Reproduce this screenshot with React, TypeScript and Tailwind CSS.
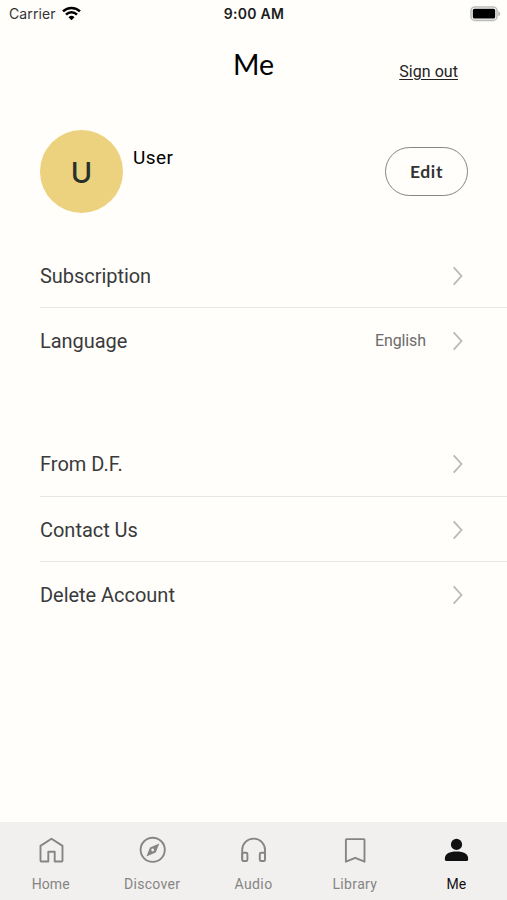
import React from "react";

function Chevron() {
  return (
    <svg width="12" height="20" viewBox="0 0 12 20" fill="none" stroke="#b9b9b7" strokeWidth="1.8" className="shrink-0">
      <path d="M1.7 1.3 9.5 10 1.7 18.7" />
    </svg>
  );
}

type RowProps = { label: string; tracking: string; value?: string; last?: boolean };

function Row({ label, tracking, value, last }: RowProps) {
  return (
    <li
      className={`ml-10 flex h-[65.2px] items-center border-b pr-[43px] pt-[2px] ${last ? "border-transparent" : "border-[#e6e6e4]"}`}
    >
      <span className={`flex-1 text-[20px] leading-6 text-[#3a3a3b] ${tracking}`}>{label}</span>
      {value && <span className="mr-[26px] text-[16px] leading-5 tracking-[-0.1px] text-[#6b6b6a]">{value}</span>}
      <Chevron />
    </li>
  );
}

function HomeIcon() {
  return (
    <svg width="28" height="28" viewBox="0 0 28 28" fill="none" stroke="currentColor" strokeWidth="1.9" strokeLinejoin="round">
      <path d="M3.5 9.9 14.5 2.7l11 7.2v14.7a.9.9 0 0 1-.9.9h-6.9v-9.7h-6.4v9.7H4.4a.9.9 0 0 1-.9-.9Z" />
    </svg>
  );
}

function CompassIcon() {
  return (
    <svg width="28" height="28" viewBox="0 0 28 28" fill="none" stroke="currentColor" strokeWidth="1.9">
      <circle cx="14.7" cy="13.8" r="12.1" />
      <path
        fill="currentColor"
        stroke="none"
        fillRule="evenodd"
        d="m21.3 7.5-3.6 9.1-9.3 3.9 3.6-9.1Zm-6.6 5.1a1.4 1.4 0 1 0 0 2.8 1.4 1.4 0 0 0 0-2.8Z"
      />
    </svg>
  );
}

function HeadphonesIcon() {
  return (
    <svg width="28" height="28" viewBox="0 0 28 28" fill="none" stroke="currentColor" strokeWidth="1.9" strokeLinejoin="round">
      <path d="M3.2 23.5V14a11.4 11.4 0 0 1 22.8 0v9.5" />
      <rect x="3.2" y="16.8" width="5.2" height="8.2" rx="1.3" />
      <rect x="20.8" y="16.8" width="5.2" height="8.2" rx="1.3" />
    </svg>
  );
}

function BookmarkIcon() {
  return (
    <svg width="28" height="28" viewBox="0 0 28 28" fill="none" stroke="currentColor" strokeWidth="1.9" strokeLinejoin="round">
      <path d="M4.9 3.8a.7.7 0 0 1 .7-.7h17.2a.7.7 0 0 1 .7.7v21.9l-9.3-3.9-9.3 3.9Z" />
    </svg>
  );
}

function PersonIcon() {
  return (
    <svg width="28" height="28" viewBox="0 0 28 28" fill="currentColor">
      <circle cx="14.5" cy="8.4" r="5.6" />
      <path d="M2.9 22.2c0-4.1 4.3-6.8 11.6-6.8s11.6 2.7 11.6 6.8v1.3a1.6 1.6 0 0 1-1.6 1.6h-20a1.6 1.6 0 0 1-1.6-1.6Z" />
    </svg>
  );
}

const tabs = [
  { label: "Home", Icon: HomeIcon, tracking: "tracking-[0.05px]" },
  { label: "Discover", Icon: CompassIcon, tracking: "tracking-[0.3px]" },
  { label: "Audio", Icon: HeadphonesIcon, tracking: "tracking-[0.4px]" },
  { label: "Library", Icon: BookmarkIcon, tracking: "tracking-[0.35px]" },
  { label: "Me", Icon: PersonIcon, tracking: "tracking-[0px]" },
];

export default function App() {
  return (
    <div className="flex h-[900px] w-[507px] flex-col overflow-hidden bg-[#fffefb] font-['Roboto',sans-serif] text-black">
      <div className="grid h-[27px] shrink-0 grid-cols-3 items-center pl-[9px] pr-[8px] font-['Inter',sans-serif]">
        <div className="flex items-center gap-[6px] text-[14px] tracking-[0.1px] text-[#333]">
          <span>Carrier</span>
          <svg width="19" height="15" viewBox="0 0 19 15" fill="none" stroke="#000" strokeWidth="2.5">
            <path d="M1 5.4a12.2 12.2 0 0 1 17 0M4 8.6a7.9 7.9 0 0 1 11 0" />
            <path d="m9.5 14.3-3-3.1a4.3 4.3 0 0 1 6 0Z" fill="#000" stroke="none" />
          </svg>
        </div>
        <div className="text-center text-[14px] font-semibold tracking-[0.3px] text-[#1c1c1c]">9:00 AM</div>
        <svg width="31" height="16" viewBox="0 0 31 16" className="-mr-[2px] justify-self-end">
          <rect x="1" y="1" width="26" height="13.4" rx="4" fill="#fff" stroke="#bdbdbb" strokeWidth="1.6" />
          <rect x="2.8" y="2.8" width="22.4" height="9.8" rx="1.6" fill="#000" />
          <path d="M28.2 5.2c1.7.6 2 1.4 2 2.5s-.3 1.9-2 2.5Z" fill="#bdbdbb" />
        </svg>
      </div>

      <header className="mt-px grid h-[72px] shrink-0 grid-cols-3 items-center">
        <h1 className="col-start-2 text-center font-['Lato',sans-serif] text-[28.5px] leading-9">Me</h1>
        <a className="mr-[49px] mt-4 justify-self-end text-[16px] leading-5 tracking-[0.05px] text-[#222] underline underline-offset-2">
          Sign out
        </a>
      </header>

      <section className="mt-[30px] flex h-[83px] shrink-0 items-center pl-10 pr-[39px]">
        <div className="flex size-[83px] items-center justify-center rounded-full bg-[#ecd27e] pt-[2px] font-['Inter',sans-serif] text-[29px] font-medium text-[#28302b]">
          U
        </div>
        <span className="ml-[10px] flex-1 self-start pt-4 text-[19px] leading-6 tracking-[0.4px]">User</span>
        <button className="h-[49px] w-[83px] rounded-full border border-[#858585] pt-[2px] font-['Lato',sans-serif] text-[17.5px] font-bold tracking-[0.6px] text-[#333]">
          Edit
        </button>
      </section>

      <ul className="mt-[30px] shrink-0">
        <Row label="Subscription" tracking="tracking-[-0.05px]" />
        <Row label="Language" tracking="tracking-[-0.05px]" value="English" last />
      </ul>
      <ul className="mt-[58px] shrink-0">
        <Row label="From D.F." tracking="tracking-[0px]" />
        <Row label="Contact Us" tracking="tracking-[-0.03px]" />
        <Row label="Delete Account" tracking="tracking-[-0.03px]" last />
      </ul>

      <nav className="mt-auto grid h-[78px] shrink-0 grid-cols-5 bg-[#f1f0ef]">
        {tabs.map(({ label, Icon, tracking }) => (
          <a key={label} className={`flex flex-col items-center pt-[14px] ${label === "Me" ? "text-[#111]" : "text-[#858583]"}`}>
            <Icon />
            <span className={`mt-[10px] text-[14px] leading-5 ${tracking}`}>{label}</span>
          </a>
        ))}
      </nav>
    </div>
  );
}
